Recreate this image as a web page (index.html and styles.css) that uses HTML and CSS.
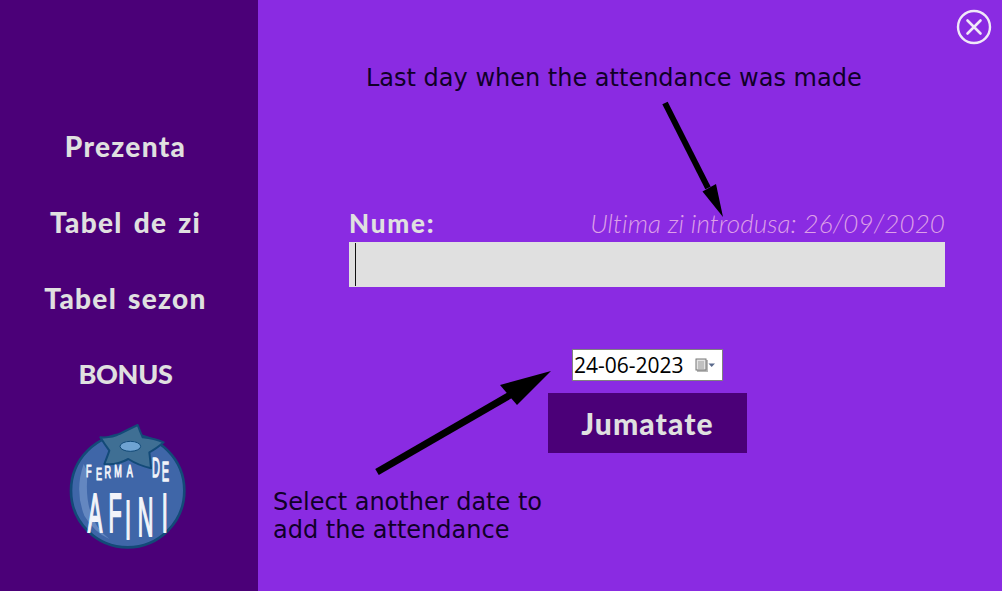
FILE: index.html
```html
<!DOCTYPE html>
<html>
<head>
    <title>Prezenta</title>
    <link rel="stylesheet" href="styles.css">
</head>
<body>
    <div class="app">
        <aside class="sidebar">
            <nav class="nav">
                <a class="nav-item">Prezenta</a>
                <a class="nav-item">Tabel de zi</a>
                <a class="nav-item">Tabel sezon</a>
                <a class="nav-item nav-caps">BONUS</a>
            </nav>
            <svg class="logo" width="170" height="150" viewBox="0 0 510 450">
                <circle cx="260" cy="245" r="170" fill="#3f66a8" stroke="#134a78" stroke-width="8"/>
                <path d="M128 165 Q100 245 130 320 Q160 370 205 390 Q125 330 140 190 Z" fill="#6487c0"/>
                <path d="M178 85 Q215 87 235 75 Q265 60 290 48 Q298 70 305 85 Q340 88 368 100 Q345 120 325 130 Q328 155 330 178 Q290 168 262 150 Q225 170 190 165 Q200 140 205 125 Q190 105 178 85 Z" fill="#3f6f94" stroke="#134a78" stroke-width="6" stroke-linejoin="round"/>
                <ellipse cx="268" cy="112" rx="31" ry="15" fill="#6fa3d2" stroke="#134a78" stroke-width="3"/>
                <text class="logo-text" font-size="34" transform="scale(.8 1.45)" x="169 206 238 275 322" y="141 146 143 141 140">FERMA</text>
                <text class="logo-text" font-size="44" transform="scale(.75 1.9)" x="444 483" y="107 113">DE</text>
                <text class="logo-text logo-big" font-size="105" transform="scale(.62 1.6)" x="226 327 406 468 584" y="230 230 244 237.5 230">AFINI</text>
            </svg>
        </aside>

        <main class="content">
            <div class="close-row">
                <svg class="close" width="36" height="36" viewBox="0 0 36 36">
                    <circle cx="18" cy="18" r="16" fill="none" stroke="#f0e8f8" stroke-width="2.4"/>
                    <path d="M11.5 11.5 L24.5 24.5 M24.5 11.5 L11.5 24.5" stroke="#f0e8f8" stroke-width="2.6" stroke-linecap="round"/>
                </svg>
            </div>

            <div class="form-head">
                <label class="name-label">Nume:</label>
                <span class="last-day">Ultima zi introdusa: 26/09/2020</span>
            </div>
            <div class="name-input"><span class="caret"></span></div>

            <div class="date-row">
                <div class="date-input">
                    <span class="date-value">24-06-2023</span>
                    <svg class="date-icon" width="22" height="16" viewBox="0 0 22 16">
                        <rect x="2" y="3" width="11" height="12" fill="#b8b8b8"/>
                        <rect x="1" y="2" width="10" height="11" fill="#e4e4e4" stroke="#777"/>
                        <path d="M3 5H9M3 7H9M3 9H9M3 11H9M4 4V12M6 4V12M8 4V12" stroke="#a8a8a8" stroke-width=".7"/>
                        <path d="M13.5 6.5H20L16.7 10Z" fill="#5a6a8c"/>
                    </svg>
                </div>
            </div>
            <button class="half-btn">Jumatate</button>

            <svg class="arrows" width="744" height="591" viewBox="258 0 744 591">
                <path d="M665 103 L708 188" stroke="#000" stroke-width="6"/>
                <path d="M723 217 L702.5 191.5 L716 184 Z" fill="#000"/>
                <path d="M377 472 L512 394" stroke="#000" stroke-width="7"/>
                <path d="M551 371 L500 385 L517 405 Z" fill="#000"/>
            </svg>
            <p class="note note-top">Last day when the attendance was made</p>
            <p class="note note-bottom">Select another date to<br>add the attendance</p>
        </main>
    </div>
</body>
</html>
```

FILE: styles.css
```css
html, body { margin: 0; padding: 0; height: 100%; overflow: hidden; }
body { font-family: Lato, sans-serif; background-color: #8a2be2; }
.app { display: flex; height: 591px; }

.sidebar { width: 251px; padding-right: 7px; background-color: #4b0078; display: flex; flex-direction: column; align-items: center; }
.nav { display: flex; flex-direction: column; align-items: center; gap: 42px; margin-top: 129px; }
.nav-item { height: 34px; line-height: 34px; font-size: 28px; font-weight: 900; letter-spacing: 1.3px; word-spacing: 3px; color: #e0e0e0; }
.nav-caps { font-size: 27px; letter-spacing: -.3px; }
.logo { margin-top: 18px; }
.logo-text { fill: #f2f4fa; stroke: #f2f4fa; stroke-width: 2px; font-family: "Liberation Sans", sans-serif; }
.logo-big { stroke-width: 4px; }

.content { position: relative; flex: 1; padding: 0 57px 0 91px; display: flex; flex-direction: column; }
.close-row { display: flex; justify-content: flex-end; margin: 9px -47px 0 0; }
.form-head { display: flex; justify-content: space-between; align-items: flex-end; margin-top: 163px; height: 31px; padding-bottom: 3px; }
.name-label { font-size: 26px; font-weight: 900; letter-spacing: 1.8px; color: #e0e0e0; }
.last-day { font-size: 26px; font-weight: 300; font-style: italic; letter-spacing: .1px; color: #dda0e8; }
.name-input { height: 45px; background-color: #e0e0e0; padding: 1px 0 1px 6px; box-sizing: border-box; }
.caret { display: block; width: 1px; height: 100%; background-color: #111; }

.date-row { display: flex; margin: 62px 0 0 223px; }
.date-input { width: 151px; height: 32px; box-sizing: border-box; border: 1px solid #808080; background-color: #fff; display: flex; align-items: center; padding-left: 1px; }
.date-value { font-family: "Open Sans", sans-serif; font-size: 21px; color: #000; }
.date-icon { margin-left: 11px; }

.half-btn { width: 199px; height: 60px; margin: 12px 0 0 199px; border: none; background-color: #4b0078; color: #e0e0e0; font-family: Lato, sans-serif; font-size: 30px; font-weight: 900; letter-spacing: 1.1px; cursor: pointer; }

.arrows { position: absolute; left: 0; top: 0; pointer-events: none; }
.note { position: absolute; margin: 0; font-family: "DejaVu Sans", sans-serif; font-size: 24px; line-height: 28px; color: #100028; }
.note-top { left: 108px; top: 64px; }
.note-bottom { left: 15px; top: 488px; }
```
